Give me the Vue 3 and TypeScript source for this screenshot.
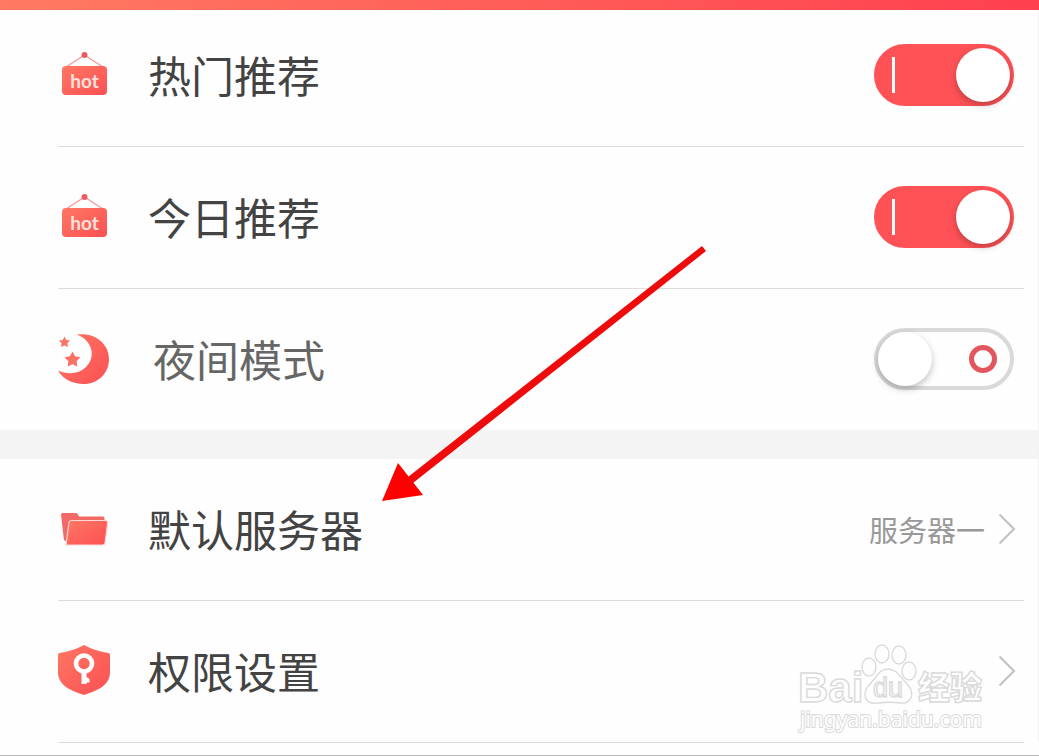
<script setup lang="ts">
import { reactive } from 'vue'

type IconName = 'hot' | 'moon' | 'folder' | 'shield'

interface ToggleItem {
  id: string
  label: string
  icon: IconName
  on: boolean
  muted: boolean
}

interface LinkItem {
  id: string
  label: string
  icon: IconName
  value: string
}

const toggles = reactive<ToggleItem[]>([
  { id: 'hot', label: '热门推荐', icon: 'hot', on: true, muted: false },
  { id: 'today', label: '今日推荐', icon: 'hot', on: true, muted: false },
  { id: 'night', label: '夜间模式', icon: 'moon', on: false, muted: true },
])

const links: LinkItem[] = [
  { id: 'server', label: '默认服务器', icon: 'folder', value: '服务器一' },
  { id: 'permission', label: '权限设置', icon: 'shield', value: '' },
]
</script>

<template>
  <main class="page">
    <svg class="defs" width="0" height="0" aria-hidden="true">
      <defs>
        <linearGradient id="coral" x1="0" y1="0" x2="1" y2="1">
          <stop offset="0" stop-color="#ff7763" />
          <stop offset="1" stop-color="#fb5054" />
        </linearGradient>
        <symbol id="icon-hot" viewBox="0 0 52 52">
          <path d="M8 18 L26.500 6 L45 18" fill="none" stroke="#f59a98" stroke-width="1.4" />
          <circle cx="26.500" cy="6" r="3" fill="#e85c62" />
          <rect x="4" y="17" width="45" height="29" rx="4" fill="url(#coral)" />
          <text x="26.500" y="39" text-anchor="middle" class="hot-text">hot</text>
        </symbol>
        <symbol id="icon-moon" viewBox="0 0 52 52">
          <path d="M19 1.500 C36 -1 51 10 51 26 C51 41 39 51 26 51 C14 51 5 46 0 37.500 C10 42 21 41 28 34 C38 24 35 8 19 1.500 Z" fill="url(#coral)" />
          <path d="M6.500 3.500 L8.300 7 L12 7.600 L9.400 10.300 L10 14 L6.500 12.400 L3 14 L3.600 10.300 L1 7.600 L4.700 7 Z" fill="#fa7568" />
          <path d="M14.500 18.500 L17 23.300 L22.300 24.200 L18.600 28.200 L19.300 33.500 L14.500 31.200 L9.700 33.500 L10.400 28.200 L6.500 24.200 L12 23.300 Z" fill="#fb7065" />
        </symbol>
        <symbol id="icon-folder" viewBox="0 0 52 52">
          <path d="M3 11.500 Q3 10 4.500 10 H18 Q19.500 10 20 11.500 L21 13.500 H45 Q46.500 13.500 46.500 15 V38 H8 Q6 38 5.800 36 Z" fill="#f26a66" />
          <path d="M13.500 17.500 H47.500 Q50 17.500 49.700 20 L47 40 Q46.700 42 44.500 42 H8 L11 19.500 Q11.300 17.500 13.500 17.500 Z" fill="url(#coral)" stroke="#ffd9d5" stroke-width="1.200" />
        </symbol>
        <symbol id="icon-shield" viewBox="0 0 52 52">
          <path d="M26 0 Q37 6 50.500 8 Q52 8.300 52 10 V27 C52 39 42 45 26 50 C10 45 0 39 0 27 V10 Q0 8.300 1.500 8 Q15 6 26 0 Z" fill="url(#coral)" />
          <circle cx="26" cy="18.500" r="8" fill="none" stroke="#fff" stroke-width="4.600" />
          <path d="M23.500 26 H28.500 V32 L31.500 34 V37.500 H28.500 V39 H23.500 Z" fill="#fff" />
        </symbol>
      </defs>
    </svg>

    <header class="bar"></header>

    <section class="group">
      <label v-for="item in toggles" :key="item.id" class="row" :for="item.id">
        <svg class="icon" aria-hidden="true"><use :href="`#icon-${item.icon}`" /></svg>
        <span class="name" :class="{ muted: item.muted }">{{ item.label }}</span>
        <input :id="item.id" v-model="item.on" class="switch" type="checkbox" role="switch" />
      </label>
    </section>

    <section class="group links">
      <button v-for="item in links" :key="item.id" class="row" type="button">
        <svg class="icon" aria-hidden="true"><use :href="`#icon-${item.icon}`" /></svg>
        <span class="name">{{ item.label }}</span>
        <span class="value">{{ item.value }}</span>
        <svg class="chevron" viewBox="0 0 18 32" aria-hidden="true">
          <path d="M1.500 1.500 L16 16 L1.500 30.500" fill="none" stroke="#c3c3c3" stroke-width="2.200" />
        </svg>
      </button>
    </section>

    <svg class="arrow" viewBox="0 0 324 256" aria-hidden="true">
      <path d="M320 0 L324 5 L31 237 L26 231 Z" fill="#ed0b0b" />
      <path d="M0 255 L16 217 L41 249 Z" fill="#fe0000" />
    </svg>

    <svg class="watermark" viewBox="0 0 192 96" aria-hidden="true">
      <g class="mark">
        <text x="2" y="62" class="latin">Bai</text>
        <path d="M92 29 C101 29 104 37 111 44 C120 53 115 64 105 63 C97 62 90 62 82 63 C70 65 64 55 74 44 C81 37 83 29 92 29 Z" />
        <ellipse cx="73" cy="27" rx="7" ry="9" />
        <ellipse cx="86" cy="14" rx="7" ry="9" />
        <ellipse cx="103" cy="15" rx="7" ry="9" />
        <ellipse cx="113" cy="31" rx="7" ry="9" />
        <text x="77" y="57" class="du">du</text>
        <text x="122" y="59" class="cjk">经验</text>
        <text x="4" y="87" class="site">jingyan.baidu.com</text>
      </g>
    </svg>
  </main>
</template>

<style>
body {
  margin: 0;
  background: #fefefe;
}
</style>

<style scoped>
.page {
  position: relative;
  box-sizing: border-box;
  min-height: 100vh;
  overflow: hidden;
  background: #fefefe;
  border-bottom: 1px solid #bdbdbd;
  font-family: "Noto Sans CJK SC", "Noto Sans", sans-serif;
}

.defs {
  position: absolute;
}

.bar {
  position: relative;
  height: 10px;
  margin-bottom: -5px;
  background: linear-gradient(90deg, #ff7a62, #ff404f);
}

.group {
  padding-left: 58px;
  padding-right: 14px;
  border-right: 1px solid #f2f2f0;
}

.links {
  border-top: 29px solid #f4f4f4;
}

.row {
  display: flex;
  align-items: center;
  box-sizing: border-box;
  width: 100%;
  height: 142px;
  padding: 0 10px 2px 0;
  border: 0;
  border-bottom: 1px solid #dcdcdc;
  background: none;
  font-family: inherit;
  text-align: left;
  cursor: pointer;
}

label.row:last-child {
  height: 141px;
  border-bottom: 0;
}

.icon {
  flex: none;
  width: 52px;
  height: 52px;
}

.hot-text {
  font: 700 19px Lato, sans-serif;
  fill: #ffe1dc;
}

.name {
  flex: 1;
  margin-left: 38px;
  padding-bottom: 2px;
  font-size: 43px;
  font-weight: 400;
  line-height: 60px;
  color: #434343;
}

.name.muted {
  margin-left: 43px;
  color: #666;
}

.value {
  margin-right: 13px;
  font-size: 29px;
  line-height: 40px;
  color: #999;
}

.links .row {
  padding-right: 8px;
}

.chevron {
  flex: none;
  width: 18px;
  height: 32px;
}

.switch {
  position: relative;
  flex: none;
  appearance: none;
  box-sizing: border-box;
  width: 140px;
  height: 62px;
  margin: 0;
  border: 4px solid #d9d9d9;
  border-radius: 31px;
  background: #fefefe;
  cursor: pointer;
}

.switch::before {
  content: "";
  position: absolute;
  top: 0;
  left: 0;
  width: 54px;
  height: 54px;
  border-radius: 50%;
  background: #fff;
  box-shadow: 0 3px 7px rgba(0, 0, 0, 0.25);
}

.switch::after {
  content: "";
  position: absolute;
  top: 13px;
  right: 13px;
  box-sizing: border-box;
  width: 28px;
  height: 28px;
  border: 5px solid #e3565d;
  border-radius: 50%;
}

.switch:checked {
  border-color: #ff5256;
  background: #ff5256;
}

.switch:checked::before {
  left: 78px;
}

.switch:checked::after {
  top: 9px;
  left: 14px;
  width: 3px;
  height: 36px;
  border: 0;
  border-radius: 0;
  background: #fff;
}

.arrow {
  position: absolute;
  top: 246px;
  left: 382px;
  width: 324px;
  height: 256px;
  pointer-events: none;
}

.watermark {
  position: absolute;
  right: 51px;
  bottom: 19px;
  width: 192px;
  height: 96px;
  pointer-events: none;
}

.mark {
  fill: #fefefe;
  stroke: #dadada;
  stroke-width: 1.4;
}

.latin {
  font: 700 42px "Liberation Sans", sans-serif;
}

.du {
  font: 400 27px "Liberation Sans", sans-serif;
}

.cjk {
  font: 900 32px "Noto Sans CJK SC", sans-serif;
}

.site {
  font: 400 21px "Noto Sans", sans-serif;
  paint-order: stroke;
  stroke-width: 2;
}
</style>
